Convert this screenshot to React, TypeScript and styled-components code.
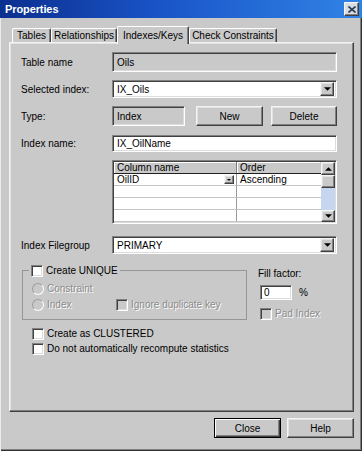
import React from "react";
import styled, { createGlobalStyle, css } from "styled-components";

const FACE = "#c9c9c9";

const GlobalStyle = createGlobalStyle`
  html, body {
    margin: 0;
    padding: 0;
    background: ${FACE};
  }
  body {
    font-family: "Liberation Sans", Arial, sans-serif;
    font-size: 10px;
    color: #000;
  }
  * {
    box-sizing: border-box;
  }
`;

const sunken = css`
  border: 1px solid;
  border-color: #808080 #fff #fff #808080;
  box-shadow:
    inset 1px 1px #404040,
    inset -1px -1px #dcdcdc;
`;

const raised = css`
  border: 1px solid;
  border-color: #f4f4f4 #404040 #404040 #f4f4f4;
  box-shadow:
    inset -1px -1px #808080,
    inset 1px 1px #e2e2e2;
`;

const disabledText = css`
  color: #8c8c8c;
  text-shadow: 1px 1px #fff;
`;

const Window = styled.div`
  width: 362px;
  height: 451px;
  background: ${FACE};
  display: flex;
  flex-direction: column;
  box-shadow:
    inset 1px 0 #ececec,
    inset -1px -1px #303030,
    inset -2px -2px #808080;
`;

const TitleBar = styled.div`
  height: 18px;
  display: flex;
  align-items: center;
  justify-content: space-between;
  padding: 0 3px 0 5px;
  background: linear-gradient(90deg, #0b2f8f 0%, #1a55c8 45%, #3083e6 100%);
`;

const Title = styled.span`
  color: #fff;
  font-weight: 700;
  font-size: 11px;
  letter-spacing: -0.1px;
`;

const CloseBox = styled.span`
  ${raised};
  width: 15px;
  height: 14px;
  display: flex;
  align-items: center;
  justify-content: center;
  background: #d6dbe4;
`;

const Body = styled.div`
  flex: 1;
  display: flex;
  flex-direction: column;
  padding: 8px 8px 0 9px;
`;

const TabStrip = styled.div`
  height: 16px;
  display: flex;
  align-items: flex-end;
  padding-left: 3px;
`;

const Tab = styled.div<{ $w: number; $active?: boolean }>`
  width: ${(p) => p.$w}px;
  height: ${(p) => (p.$active ? 18 : 14)}px;
  margin-bottom: ${(p) => (p.$active ? -2 : 0)}px;
  position: relative;
  z-index: ${(p) => (p.$active ? 2 : 0)};
  display: flex;
  align-items: ${(p) => (p.$active ? "flex-start" : "center")};
  padding-top: ${(p) => (p.$active ? 3 : 0)}px;
  justify-content: center;
  white-space: nowrap;
  background: ${FACE};
  border-top: 1px solid #fff;
  border-left: 1px solid #fff;
  border-right: 1px solid #404040;
  border-radius: 2px 2px 0 0;
  box-shadow: inset -1px 0 #808080;
`;

const Panel = styled.div`
  ${raised};
  height: 370px;
  display: flex;
  flex-direction: column;
  padding: 9px 13px 0 11px;
`;

const FieldRow = styled.div<{ $h: number; $mt: number }>`
  display: grid;
  grid-template-columns: 91px 225px;
  align-items: center;
  height: ${(p) => p.$h}px;
  margin-top: ${(p) => p.$mt}px;
`;

const Label = styled.span`
  white-space: nowrap;
`;

const Field = styled.div<{ $readonly?: boolean; $w?: number }>`
  ${sunken};
  width: ${(p) => (p.$w ? `${p.$w}px` : "100%")};
  height: 100%;
  display: flex;
  align-items: center;
  padding-left: 4px;
  background: ${(p) => (p.$readonly ? FACE : "#fff")};
  white-space: nowrap;
`;

const Combo = styled(Field)`
  justify-content: space-between;
  padding-right: 2px;
`;

const DropButton = styled.span<{ $size: number }>`
  ${raised};
  width: ${(p) => p.$size}px;
  height: ${(p) => p.$size}px;
  display: flex;
  align-items: center;
  justify-content: center;
  background: ${FACE};
  flex-shrink: 0;
`;

const TypeGroup = styled.div`
  display: flex;
  height: 100%;
`;

const Button = styled.button<{ $w: number; $ml?: number; $default?: boolean }>`
  ${raised};
  width: ${(p) => p.$w}px;
  height: 100%;
  margin-left: ${(p) => p.$ml ?? 0}px;
  background: ${FACE};
  font: inherit;
  color: #000;
  padding: 0;
  ${(p) =>
    p.$default &&
    css`
      border-color: #000;
      box-shadow:
        inset 1px 1px #fff,
        inset -1px -1px #404040,
        inset -2px -2px #808080;
    `}
`;

const Grid = styled.div`
  ${sunken};
  height: 100%;
  display: flex;
  padding: 1px;
  background: #fff;
`;

const GridBody = styled.div`
  flex: 1;
  display: flex;
  flex-direction: column;
`;

const GridRow = styled.div<{ $header?: boolean }>`
  height: 12px;
  display: flex;
  border-bottom: 1px solid ${(p) => (p.$header ? "#202020" : "#c4c4c4")};
`;

const Cell = styled.div<{ $first?: boolean; $header?: boolean }>`
  ${(p) => (p.$first ? "width: 123px;" : "flex: 1;")}
  display: flex;
  align-items: center;
  justify-content: space-between;
  padding: 0 2px 0 3px;
  line-height: 11px;
  white-space: nowrap;
  border-right: 1px solid ${(p) => (p.$first ? "#9a9a9a" : "transparent")};
  ${(p) =>
    p.$header &&
    css`
      background: ${FACE};
      box-shadow: inset 1px 1px #fff;
      border-right-color: ${p.$first ? "#808080" : "transparent"};
    `}
`;

const CellDrop = styled.span`
  ${raised};
  width: 10px;
  height: 9px;
  background: ${FACE};
  display: flex;
  align-items: center;
  justify-content: center;
`;

const Scrollbar = styled.div`
  width: 14px;
  display: flex;
  flex-direction: column;
  background: #c6d6ee;
`;

const ScrollButton = styled.span<{ $h: number }>`
  ${raised};
  height: ${(p) => p.$h}px;
  display: flex;
  align-items: center;
  justify-content: center;
  background: ${FACE};
  flex-shrink: 0;
`;

const ScrollTrack = styled.span`
  flex: 1;
`;

const Options = styled.div`
  display: flex;
  margin-top: 10px;
  margin-left: 1px;
`;

const GroupBox = styled.fieldset`
  width: 225px;
  margin: 0;
  padding: 5px 8px 3px 9px;
  border: 1px solid #969696;
  display: flex;
  flex-direction: column;
  gap: 3px;
`;

const Legend = styled.legend`
  padding: 0 2px;
  margin-left: -3px;
  height: 13px;
  display: flex;
  align-items: center;
  gap: 3px;
`;

const OptRow = styled.div<{ $mt?: number; $ml?: number }>`
  height: 13px;
  display: flex;
  align-items: center;
  gap: 3px;
  margin-top: ${(p) => p.$mt ?? 0}px;
  margin-left: ${(p) => p.$ml ?? 0}px;
  white-space: nowrap;
`;

const OptSlot = styled.span<{ $w: number }>`
  width: ${(p) => p.$w}px;
  display: flex;
  align-items: center;
  gap: 3px;
`;

const Check = styled.span<{ $disabled?: boolean }>`
  ${sunken};
  width: 12px;
  height: 12px;
  flex-shrink: 0;
  background: ${(p) => (p.$disabled ? FACE : "#fff")};
`;

const Radio = styled.span`
  width: 12px;
  height: 12px;
  flex-shrink: 0;
  border-radius: 50%;
  border: 1px solid;
  border-color: #a0a0a0 #fff #fff #a0a0a0;
  background: ${FACE};
`;

const OptText = styled.span<{ $disabled?: boolean }>`
  ${(p) => p.$disabled && disabledText}
`;

const FillColumn = styled.div`
  margin-left: 11px;
  display: flex;
  flex-direction: column;
`;

const FillLabel = styled.span`
  margin-top: 3px;
  line-height: 13px;
`;

const FillRow = styled.div`
  margin-top: 5px;
  margin-left: 2px;
  display: flex;
  align-items: center;
  gap: 7px;
`;

const SmallInput = styled.span`
  ${sunken};
  width: 32px;
  height: 15px;
  background: #fff;
  display: flex;
  align-items: center;
  padding-left: 3px;
`;

const Footer = styled.div`
  display: flex;
  justify-content: flex-end;
  gap: 6px;
  height: 20px;
  margin-top: 6px;
`;

const DownArrow = ({ w = 7 }: { w?: number }) => (
  <svg width={w} height={Math.ceil(w / 2)} viewBox="0 0 8 4">
    <path d="M0 0h8L4 4z" fill="#000" />
  </svg>
);

const UpArrow = () => (
  <svg width="7" height="4" viewBox="0 0 8 4">
    <path d="M0 4h8L4 0z" fill="#000" />
  </svg>
);

const CloseGlyph = () => (
  <svg width="8" height="7" viewBox="0 0 8 7">
    <path d="M0.5 0.5l7 6M7.5 0.5l-7 6" stroke="#2a3a55" strokeWidth="1.6" />
  </svg>
);

const TABS = [
  { label: "Tables", w: 39 },
  { label: "Relationships", w: 66 },
  { label: "Indexes/Keys", w: 72, active: true },
  { label: "Check Constraints", w: 88 },
];

export default function App() {
  return (
    <>
      <GlobalStyle />
      <Window>
        <TitleBar>
          <Title>Properties</Title>
          <CloseBox>
            <CloseGlyph />
          </CloseBox>
        </TitleBar>
        <Body>
          <TabStrip>
            {TABS.map((t) => (
              <Tab key={t.label} $w={t.w} $active={t.active}>
                {t.label}
              </Tab>
            ))}
          </TabStrip>
          <Panel>
            <FieldRow $h={20} $mt={0}>
              <Label>Table name</Label>
              <Field $readonly>Oils</Field>
            </FieldRow>
            <FieldRow $h={18} $mt={8}>
              <Label>Selected index:</Label>
              <Combo>
                IX_Oils
                <DropButton $size={14}>
                  <DownArrow />
                </DropButton>
              </Combo>
            </FieldRow>
            <FieldRow $h={20} $mt={8}>
              <Label>Type:</Label>
              <TypeGroup>
                <Field $readonly $w={73}>
                  Index
                </Field>
                <Button $w={67} $ml={11}>
                  New
                </Button>
                <Button $w={66} $ml={8}>
                  Delete
                </Button>
              </TypeGroup>
            </FieldRow>
            <FieldRow $h={17} $mt={9}>
              <Label>Index name:</Label>
              <Field>IX_OilName</Field>
            </FieldRow>
            <FieldRow $h={64} $mt={8}>
              <span />
              <Grid>
                <GridBody>
                  <GridRow $header>
                    <Cell $first $header>
                      Column name
                    </Cell>
                    <Cell $header>Order</Cell>
                  </GridRow>
                  <GridRow>
                    <Cell $first>
                      OilID
                      <CellDrop>
                        <DownArrow w={4} />
                      </CellDrop>
                    </Cell>
                    <Cell>Ascending</Cell>
                  </GridRow>
                  <GridRow>
                    <Cell $first />
                    <Cell />
                  </GridRow>
                  <GridRow>
                    <Cell $first />
                    <Cell />
                  </GridRow>
                  <GridRow>
                    <Cell $first />
                    <Cell />
                  </GridRow>
                </GridBody>
                <Scrollbar>
                  <ScrollButton $h={13}>
                    <UpArrow />
                  </ScrollButton>
                  <ScrollButton $h={13} />
                  <ScrollTrack />
                  <ScrollButton $h={12}>
                    <DownArrow />
                  </ScrollButton>
                </Scrollbar>
              </Grid>
            </FieldRow>
            <FieldRow $h={18} $mt={12}>
              <Label>Index Filegroup</Label>
              <Combo>
                PRIMARY
                <DropButton $size={14}>
                  <DownArrow />
                </DropButton>
              </Combo>
            </FieldRow>
            <Options>
              <GroupBox>
                <Legend>
                  <Check />
                  <OptText>Create UNIQUE</OptText>
                </Legend>
                <OptRow>
                  <Radio />
                  <OptText $disabled>Constraint</OptText>
                </OptRow>
                <OptRow>
                  <OptSlot $w={81}>
                    <Radio />
                    <OptText $disabled>Index</OptText>
                  </OptSlot>
                  <Check $disabled />
                  <OptText $disabled>Ignore duplicate key</OptText>
                </OptRow>
              </GroupBox>
              <FillColumn>
                <FillLabel>Fill factor:</FillLabel>
                <FillRow>
                  <SmallInput>0</SmallInput>
                  <span>%</span>
                </FillRow>
                <OptRow $mt={7} $ml={2}>
                  <Check $disabled />
                  <OptText $disabled>Pad Index</OptText>
                </OptRow>
              </FillColumn>
            </Options>
            <OptRow $mt={7} $ml={11}>
              <Check />
              <OptText>Create as CLUSTERED</OptText>
            </OptRow>
            <OptRow $mt={2} $ml={11}>
              <Check />
              <OptText>Do not automatically recompute statistics</OptText>
            </OptRow>
          </Panel>
          <Footer>
            <Button $w={67} $default>
              Close
            </Button>
            <Button $w={67}>Help</Button>
          </Footer>
        </Body>
      </Window>
    </>
  );
}
